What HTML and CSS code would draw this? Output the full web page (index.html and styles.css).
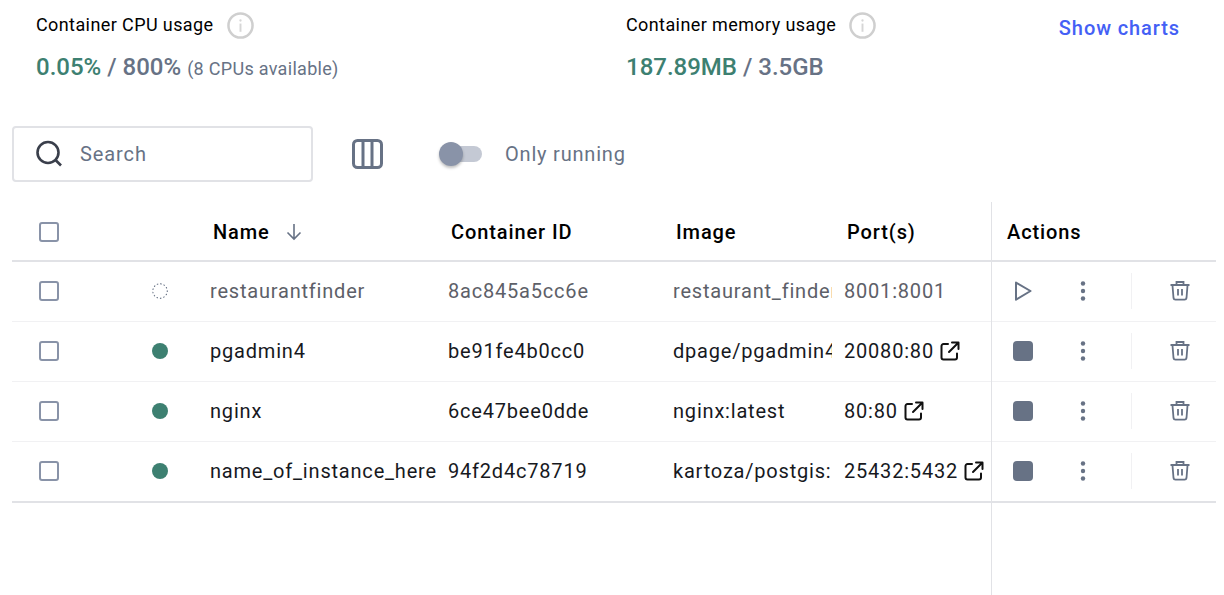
FILE: index.html
```html
<!DOCTYPE html>
<html lang="en">
<head>
    <meta charset="UTF-8">
    <meta name="viewport" content="width=device-width, initial-scale=1.0">
    <title>Containers</title>
    <link rel="stylesheet" href="styles.css">
</head>
<body>

<svg class="defs" width="0" height="0">
    <symbol id="i-info" viewBox="0 0 28 28">
        <circle cx="14" cy="14" r="12.5" fill="none" stroke="#cfcfcf" stroke-width="2.6"/>
        <circle cx="14" cy="8.8" r="1.2" fill="#d6d6d6"/>
        <rect x="13" y="12" width="2" height="8.5" fill="#d6d6d6"/>
    </symbol>
    <symbol id="i-open" viewBox="0 0 20 20">
        <path d="M8 3H3.500a2 2 0 0 0-2 2V16.500a2 2 0 0 0 2 2H15a2 2 0 0 0 2-2V12.500" fill="none" stroke="#111" stroke-width="2" stroke-linecap="round"/>
        <path d="M9 11L18 2M12 1.500H18.500V8" fill="none" stroke="#111" stroke-width="2" stroke-linecap="round" stroke-linejoin="round"/>
    </symbol>
    <symbol id="i-more" viewBox="0 0 6 20">
        <circle cx="3" cy="2.500" r="2.200" fill="#677285"/>
        <circle cx="3" cy="10" r="2.200" fill="#677285"/>
        <circle cx="3" cy="17.500" r="2.200" fill="#677285"/>
    </symbol>
    <symbol id="i-trash" viewBox="0 0 20 20">
        <path d="M0.500 4H19.500M6.500 3.500V1H13.500V3.500M2.500 4.500L3.500 17a2 2 0 0 0 2 1.700H14.500a2 2 0 0 0 2-1.700L17.500 4.500M8 8V14.500M12 8V14.500" fill="none" stroke="#677285" stroke-width="1.800"/>
    </symbol>
</svg>

<section class="stats">
    <div class="stat stat-cpu">
        <div class="stat-label">Container CPU usage <svg class="info"><use href="#i-info"/></svg></div>
        <div class="stat-value"><span class="green">0.05%</span> / 800% <small>(8 CPUs available)</small></div>
    </div>
    <div class="stat stat-mem">
        <div class="stat-label">Container memory usage <svg class="info"><use href="#i-info"/></svg></div>
        <div class="stat-value"><span class="green">187.89MB</span> / 3.5GB</div>
    </div>
    <a class="show-charts" href="#">Show charts</a>
</section>

<section class="toolbar">
    <label class="search">
        <svg width="28" height="28" viewBox="0 0 28 28">
            <circle cx="13" cy="12.500" r="10.500" fill="none" stroke="#3a3f4b" stroke-width="2.600"/>
            <path d="M20.500 20L26 25.500" stroke="#3a3f4b" stroke-width="2.600"/>
        </svg>
        <input type="text" placeholder="Search">
    </label>
    <svg class="columns" width="32" height="30" viewBox="0 0 32 30">
        <rect x="1.500" y="1.500" width="28" height="27" rx="4" fill="none" stroke="#677285" stroke-width="3"/>
        <path d="M11 2V28M20 2V28" stroke="#677285" stroke-width="3"/>
    </svg>
    <div class="toggle"><span class="thumb"></span></div>
    <span class="toggle-label">Only running</span>
</section>

<section class="table">
    <div class="row head">
        <div class="cell cell-check"><span class="checkbox"></span></div>
        <div class="cell"></div>
        <div class="cell">Name
            <svg class="sort" width="16" height="18" viewBox="0 0 16 18">
                <path d="M8 1V16M1.500 9.500L8 16L14.500 9.500" fill="none" stroke="#677285" stroke-width="1.600"/>
            </svg>
        </div>
        <div class="cell">Container ID</div>
        <div class="cell">Image</div>
        <div class="cell">Port(s)</div>
        <div class="cell cell-actions">Actions</div>
    </div>

    <div class="row stopped">
        <div class="cell cell-check"><span class="checkbox"></span></div>
        <div class="cell">
            <svg class="status" viewBox="0 0 16 16">
                <circle cx="8" cy="8" r="7.300" fill="none" stroke="#677285" stroke-width="1.300" stroke-linecap="round" stroke-dasharray="0.400 3.100"/>
            </svg>
        </div>
        <div class="cell">restaurantfinder</div>
        <div class="cell">8ac845a5cc6e</div>
        <div class="cell">restaurant_finder</div>
        <div class="cell">8001:8001</div>
        <div class="cell cell-actions">
            <svg class="act-main" width="20" height="20" viewBox="0 0 20 20">
                <path d="M3 1.500L17.500 10L3 18.700Z" fill="none" stroke="#677285" stroke-width="2" stroke-linejoin="round"/>
            </svg>
            <svg class="more"><use href="#i-more"/></svg>
            <span class="act-sep"></span>
            <svg class="trash"><use href="#i-trash"/></svg>
        </div>
    </div>

    <div class="row">
        <div class="cell cell-check"><span class="checkbox"></span></div>
        <div class="cell"><span class="status on"></span></div>
        <div class="cell">pgadmin4</div>
        <div class="cell">be91fe4b0cc0</div>
        <div class="cell">dpage/pgadmin4:latest</div>
        <div class="cell">20080:80 <svg class="open"><use href="#i-open"/></svg></div>
        <div class="cell cell-actions">
            <span class="stop act-main"></span>
            <svg class="more"><use href="#i-more"/></svg>
            <span class="act-sep"></span>
            <svg class="trash"><use href="#i-trash"/></svg>
        </div>
    </div>

    <div class="row">
        <div class="cell cell-check"><span class="checkbox"></span></div>
        <div class="cell"><span class="status on"></span></div>
        <div class="cell">nginx</div>
        <div class="cell">6ce47bee0dde</div>
        <div class="cell">nginx:latest</div>
        <div class="cell">80:80 <svg class="open"><use href="#i-open"/></svg></div>
        <div class="cell cell-actions">
            <span class="stop act-main"></span>
            <svg class="more"><use href="#i-more"/></svg>
            <span class="act-sep"></span>
            <svg class="trash"><use href="#i-trash"/></svg>
        </div>
    </div>

    <div class="row last">
        <div class="cell cell-check"><span class="checkbox"></span></div>
        <div class="cell"><span class="status on"></span></div>
        <div class="cell">name_of_instance_here</div>
        <div class="cell">94f2d4c78719</div>
        <div class="cell">kartoza/postgis:latest</div>
        <div class="cell">25432:5432 <svg class="open"><use href="#i-open"/></svg></div>
        <div class="cell cell-actions">
            <span class="stop act-main"></span>
            <svg class="more"><use href="#i-more"/></svg>
            <span class="act-sep"></span>
            <svg class="trash"><use href="#i-trash"/></svg>
        </div>
    </div>
</section>

</body>
</html>
```

FILE: styles.css
```css
body {
    font-family: Roboto, "Liberation Sans", sans-serif;
    background-color: #fff;
    color: #17191e;
    margin: 0;
    height: 595px;
    overflow: hidden;
}

.defs {
    display: block;
    height: 0;
}

/* usage stats */
.stats {
    display: flex;
    height: 126px;
    box-sizing: border-box;
    padding: 10px 44px 0 36px;
}

.stat-cpu {
    width: 590px;
}

.stat-mem {
    flex: 1;
}

.stat-label {
    display: flex;
    align-items: center;
    gap: 13px;
    height: 28px;
    font-size: 18px;
    letter-spacing: 0.4px;
    color: #000;
}

.info {
    width: 27px;
    height: 27px;
    margin-top: 3px;
}

.stat-value {
    margin-top: 13px;
    font-size: 24px;
    line-height: 32px;
    font-weight: 500;
    color: #677285;
}

.stat-value small {
    font-size: 18px;
    font-weight: 400;
    letter-spacing: 0.3px;
}

.green {
    color: #3d8071;
}

.show-charts {
    font-size: 20px;
    font-weight: 500;
    letter-spacing: 0.9px;
    color: #4460f5;
    text-decoration: none;
    margin-top: 6px;
}

/* search row */
.toolbar {
    display: flex;
    align-items: center;
    height: 56px;
    margin-left: 12px;
}

.search {
    display: flex;
    align-items: center;
    gap: 17px;
    width: 301px;
    height: 56px;
    box-sizing: border-box;
    padding-left: 21px;
    border: 2px solid #e1e2e6;
    border-radius: 4px;
}

.search input {
    border: none;
    outline: none;
    width: 200px;
    padding: 0;
    font-family: inherit;
    font-size: 20px;
    letter-spacing: 0.9px;
}

.search input::placeholder {
    color: #677285;
}

.columns {
    margin-left: 39px;
}

.toggle {
    display: flex;
    align-items: center;
    width: 41px;
    height: 16px;
    margin-left: 57px;
    background-color: #c4c9d4;
    border-radius: 8px;
}

.thumb {
    display: block;
    width: 24px;
    height: 24px;
    margin-left: -2px;
    background-color: #8993a8;
    border-radius: 50%;
    box-shadow: 0 2px 3px rgba(0, 0, 0, 0.25);
}

.toggle-label {
    margin-left: 23px;
    font-size: 20px;
    letter-spacing: 0.8px;
    color: #677285;
}

/* table */
.table {
    position: relative;
    margin: 20px 8px 0 12px;
    height: 393px;
}

.table::after {
    content: "";
    position: absolute;
    left: 979px;
    top: 0;
    bottom: 0;
    width: 1px;
    background-color: #e1e2e6;
}

.row {
    display: grid;
    grid-template-columns: 126px 60px 238px 225px 171px 159px 225px;
    align-items: center;
    height: 60px;
    box-sizing: border-box;
    padding-bottom: 1px;
    border-bottom: 1px solid #f1f1f3;
    font-size: 20px;
    letter-spacing: 0.8px;
}

.row.head {
    height: 60px;
    padding: 2px 0 0;
    border-bottom: 2px solid #e1e2e6;
    font-weight: 500;
    letter-spacing: 0.9px;
    color: #000;
}

.row.last {
    height: 61px;
    padding-bottom: 2px;
    border-bottom: 2px solid #e1e2e6;
}

.row.stopped {
    color: #5d6068;
}

.cell {
    display: flex;
    align-items: center;
    white-space: nowrap;
    overflow: hidden;
    padding-left: 12px;
}

.head .cell {
    padding-left: 15px;
}

.cell-check,
.head .cell-check {
    padding-left: 27px;
}

.cell-actions {
    padding-left: 0;
    height: 36px;
}

.head .cell-actions {
    padding-left: 16px;
    height: auto;
}

.checkbox {
    display: block;
    width: 16px;
    height: 16px;
    border: 2px solid #8993a8;
    border-radius: 3px;
}

.status {
    display: block;
    width: 16px;
    height: 16px;
    margin-left: 2px;
    box-sizing: border-box;
    border-radius: 50%;
}

.status.on {
    background-color: #3d8071;
}

.sort {
    margin-left: 16px;
}

.open {
    width: 20px;
    height: 20px;
    margin-left: 6px;
    flex: none;
}

.act-main {
    margin-left: 22px;
    flex: none;
}

.stop {
    display: block;
    width: 20px;
    height: 20px;
    background-color: #677285;
    border-radius: 4px;
}

.more {
    width: 6px;
    height: 20px;
    margin-left: 47px;
    flex: none;
}

.act-sep {
    display: block;
    width: 1px;
    height: 36px;
    margin-left: 45px;
    background-color: #f1f1f3;
    flex: none;
}

.trash {
    width: 20px;
    height: 20px;
    margin-left: 38px;
    flex: none;
}
```
